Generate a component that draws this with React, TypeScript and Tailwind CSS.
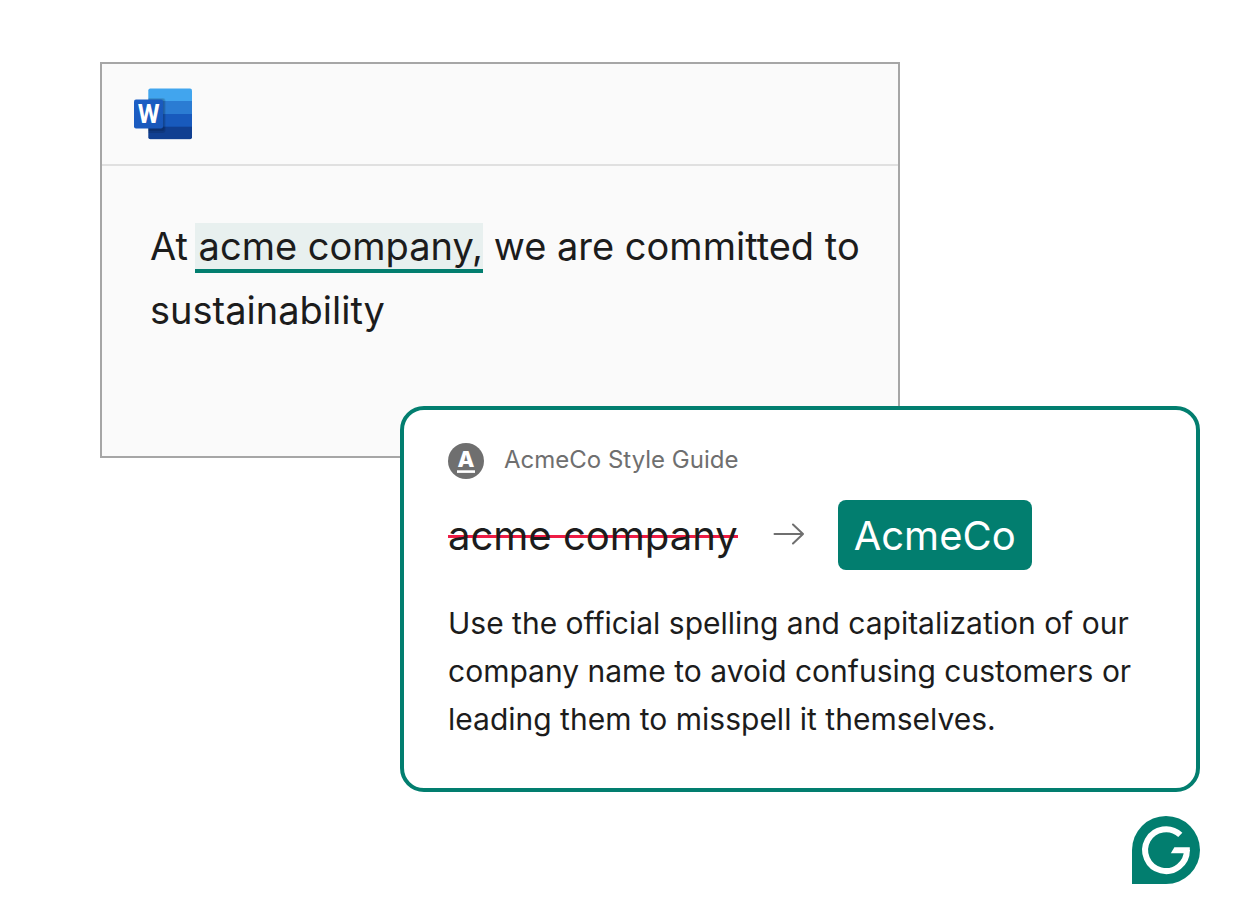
const BODY_TEXT = 'text-[#1c1c1c]'

function WordLogo() {
  return (
    <svg className="h-[52px] w-[60px]" viewBox="0 1 60 52" role="img" aria-label="Word">
      <defs>
        <clipPath id="pages">
          <rect x="15.3" y="1.5" width="43.7" height="50.7" rx="2" />
        </clipPath>
        <linearGradient id="tile" x1="0" y1="0" x2="1" y2="1">
          <stop offset="0" stopColor="#1c5fc6" />
          <stop offset="1" stopColor="#1856b8" />
        </linearGradient>
      </defs>
      <g clipPath="url(#pages)">
        <rect x="15" y="1" width="44" height="14" fill="#41a5ee" />
        <rect x="15" y="14" width="44" height="14" fill="#2b7cd3" />
        <rect x="15" y="27" width="44" height="14" fill="#185abd" />
        <rect x="15" y="39.7" width="44" height="13" fill="#103f91" />
        <rect x="12" y="11" width="20.5" height="35" rx="3" fill="#000" opacity="0.12" />
        <rect x="12" y="12" width="19.5" height="32" rx="2" fill="#000" opacity="0.12" />
      </g>
      <rect x="1" y="12.4" width="29" height="29" rx="2" fill="url(#tile)" />
      <text
        x="15.6"
        y="36"
        textAnchor="middle"
        fill="#fff"
        className="font-[Roboto,sans-serif] text-[25px] font-bold"
      >
        W
      </text>
    </svg>
  )
}

function GuideBadge() {
  return (
    <svg className="size-9" viewBox="0 0 36 36" aria-hidden="true">
      <circle cx="18" cy="18" r="18" fill="#6f6f6f" />
      <text
        x="18"
        y="24"
        textAnchor="middle"
        fill="#fff"
        className="font-[Inter,sans-serif] text-[22px] font-extrabold"
      >
        A
      </text>
      <rect x="9" y="27.3" width="18" height="2.6" fill="#fff" />
    </svg>
  )
}

function Arrow() {
  return (
    <svg className="h-6 w-8" viewBox="0 0 32 24" fill="none" stroke="#6f6f6f" strokeWidth="2" aria-hidden="true">
      <path d="M2.5 11H31M21 1.5L31 11L21 20.5" strokeLinecap="round" strokeLinejoin="round" />
    </svg>
  )
}

function GrammarlyMark() {
  return (
    <svg className="size-[68px]" viewBox="0 0 68 68" role="img" aria-label="Grammarly">
      <path d="M34 0A34 34 0 1 1 34 68H0V34A34 34 0 0 1 34 0Z" fill="#027e6f" />
      <path d="M48.3 18.9A20.9 20.9 0 1 0 54.9 34" fill="none" stroke="#fff" strokeWidth="6" />
      <path d="M42.4 31.2H57.8V35L54.5 37.2H38.8Z" fill="#fff" />
    </svg>
  )
}

function DocumentWindow() {
  return (
    <section className="mr-[300px] min-h-[396px] border-2 border-[#a6a6a6] bg-[#fafafa]">
      <header className="border-b-2 border-[#e0e0e0] px-[31px] pt-6 pb-6">
        <WordLogo />
      </header>
      <p className={`pt-12 pr-6 pl-12 text-[38px] leading-[64px] ${BODY_TEXT}`}>
        At{' '}
        <span className="-ml-1 border-b-4 border-[#027e6f] bg-[#e8f0ef] pl-1">acme company,</span>{' '}
        we are committed to
        <br />
        sustainability
      </p>
    </section>
  )
}

function SuggestionCard() {
  return (
    <section className="relative -mt-[52px] ml-[300px] rounded-3xl border-4 border-[#027e6f] bg-white px-11 pt-[33px] pb-[45px]">
      <div className="flex items-start gap-5">
        <GuideBadge />
        <h2 className="text-[24px] leading-[34px] text-[#6f6f6f]">AcmeCo Style Guide</h2>
      </div>
      <div className="mt-[21px] flex items-center gap-[34px]">
        <del
          className={`bg-linear-to-r from-[#ee1c45] to-[#ee1c45] bg-[length:100%_3px] bg-[position:0_35px] bg-no-repeat pt-0.5 text-[40px] leading-[68px] no-underline ${BODY_TEXT}`}
        >
          acme company
        </del>
        <Arrow />
        <button
          type="button"
          className="rounded-lg bg-[#027e6f] px-4 pt-0.5 text-[40px] leading-[68px] text-white"
        >
          AcmeCo
        </button>
      </div>
      <p className={`mt-[29px] text-[30px] leading-[48px] ${BODY_TEXT}`}>
        Use the official spelling and capitalization of our company name to avoid confusing customers or leading them
        to misspell it themselves.
      </p>
    </section>
  )
}

export default function App() {
  return (
    <main className="min-h-screen bg-white pt-[62px] pr-12 pb-8 pl-[100px] font-[Inter,sans-serif]">
      <DocumentWindow />
      <SuggestionCard />
      <div className="mt-6 flex justify-end">
        <GrammarlyMark />
      </div>
    </main>
  )
}
